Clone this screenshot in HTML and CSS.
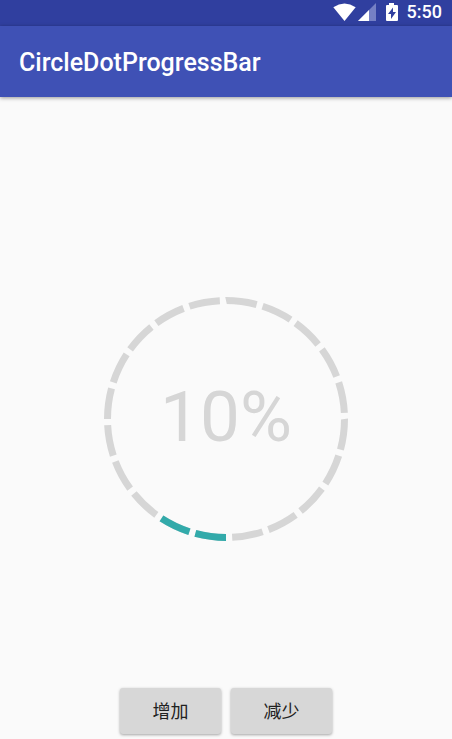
FILE: index.html
```html
<!DOCTYPE html>
<html lang="zh">
<head>
<meta charset="utf-8">
<meta name="viewport" content="width=device-width, initial-scale=1">
<title>CircleDotProgressBar</title>
<link rel="stylesheet" href="styles.css">
</head>
<body>
<div class="status-bar">
  <svg class="status-icons" viewBox="0 0 66 20" width="66" height="20" aria-hidden="true">
    <path fill="#fff" d="M0.300 5.200Q11.500-2.200 22.700 5.200L11.500 19Z"/>
    <path fill="#7580c4" d="M43 1V19H25Z"/>
    <path fill="#fff" d="M36 8V19H25Z"/>
    <path fill="#fff" fill-rule="evenodd" d="M56 1h5v2h3q1 0 1 1v14q0 1-1 1H54q-1 0-1-1V4q0-1 1-1h2zM60 5.500l-5 6.500h3v5l5-7h-3z"/>
  </svg>
  <time class="clock">5:50</time>
</div>
<header class="toolbar"><h1 class="title">CircleDotProgressBar</h1></header>
<main class="content">
  <div class="ring" role="progressbar" aria-valuenow="10" aria-valuemin="0" aria-valuemax="100">
    <svg class="ring-art" viewBox="0 0 244 244" aria-hidden="true">
      <g transform="rotate(90 122 122)">
        <circle class="track" cx="122" cy="122" r="118.500" pathLength="360"/>
        <circle class="fill" cx="122" cy="122" r="118.500" pathLength="360"/>
      </g>
    </svg>
    <span class="percent">10%</span>
  </div>
  <div class="actions">
    <button class="button" type="button">增加</button>
    <button class="button" type="button">减少</button>
  </div>
</main>
</body>
</html>
```
FILE: styles.css
```css
* {
  box-sizing: border-box;
}

body {
  margin: 0;
  min-height: 100vh;
  display: flex;
  flex-direction: column;
  background: #fafafa;
  font-family: Roboto, "Noto Sans CJK SC", sans-serif;
}

.status-bar {
  display: flex;
  justify-content: flex-end;
  align-items: center;
  gap: 8px;
  height: 26px;
  padding: 0 10px 2px 0;
  background: #303f9f;
  color: #fff;
}

.clock {
  font-size: 18px;
  font-weight: 500;
  line-height: 24px;
}

.toolbar {
  display: flex;
  align-items: center;
  height: 71px;
  padding: 2px 19px 0;
  background: #3f51b5;
  color: #fff;
  box-shadow: 0 1px 4px rgba(0, 0, 0, 0.4);
}

.title {
  margin: 0;
  font-size: 25px;
  font-weight: 500;
  line-height: 32px;
}

.content {
  flex: 1;
  display: grid;
  grid-template-rows: 1fr auto 1fr;
  justify-items: center;
  padding-top: 2px;
}

.ring {
  grid-row: 2;
  display: grid;
  place-items: center;
  width: 244px;
}

.ring-art,
.percent {
  grid-area: 1 / 1;
}

.ring-art {
  width: 100%;
}

.track,
.fill {
  fill: none;
  stroke-width: 7px;
}

.track {
  stroke: #d6d6d6;
  stroke-dasharray: 15 3;
}

.fill {
  stroke: #32aaaa;
  stroke-dasharray: 15 3 15 327;
}

.percent {
  padding-bottom: 5px;
  color: #d6d6d6;
  font-size: 71px;
  line-height: 84px;
}

.actions {
  grid-row: 3;
  align-self: end;
  display: flex;
  gap: 10px;
  padding-bottom: 5px;
}

.button {
  min-width: 101px;
  height: 46px;
  padding: 0 16px 2px;
  border: 0;
  border-radius: 3px;
  background: #d7d7d7;
  color: #212121;
  font-family: inherit;
  font-size: 18px;
  box-shadow: 0 1px 3px rgba(0, 0, 0, 0.35);
}
```
